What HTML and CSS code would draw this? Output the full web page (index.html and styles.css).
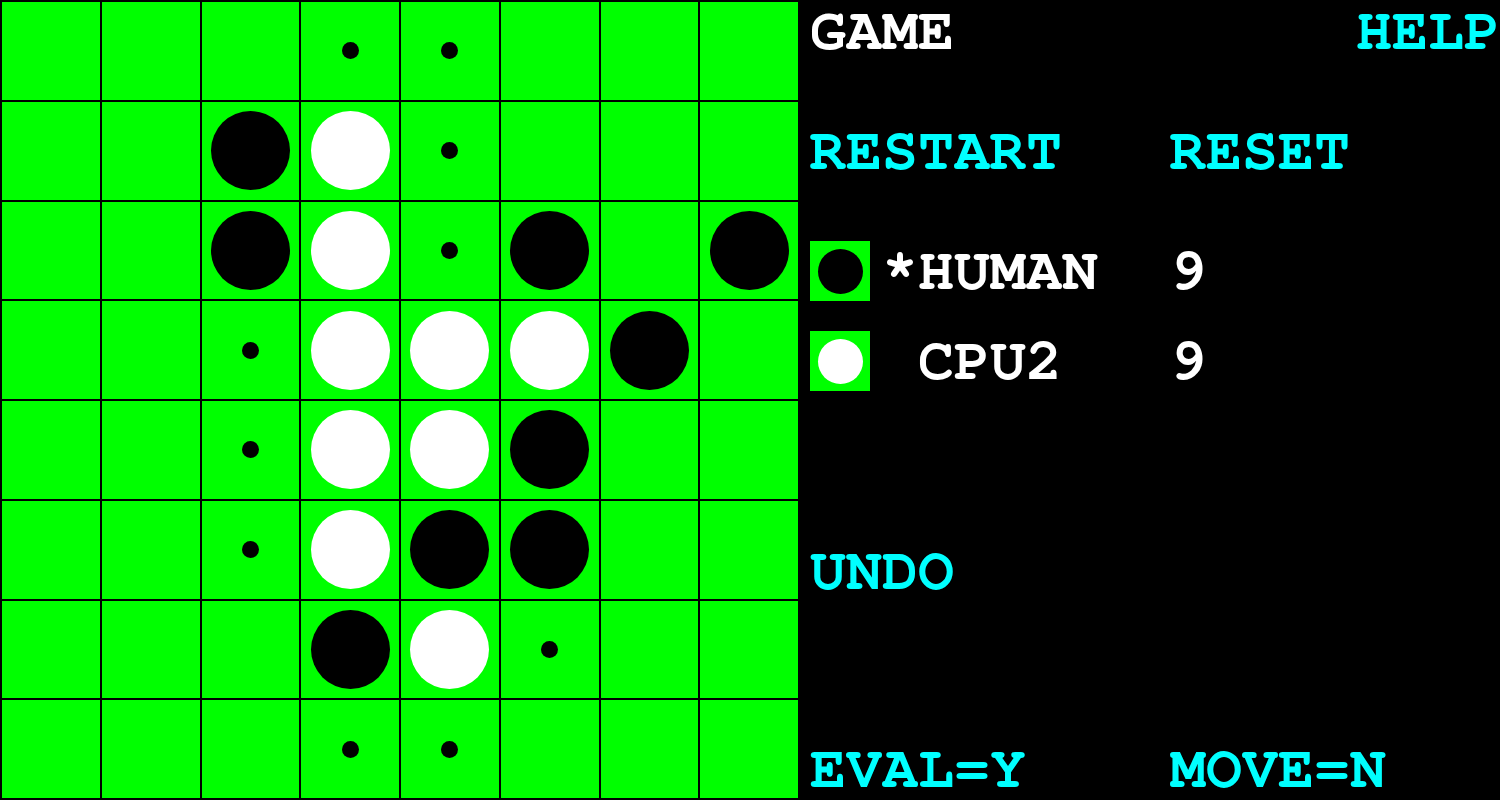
FILE: index.html
```html
<!DOCTYPE html>
<html>
	<head>
		<meta charset="UTF-8" />
		<title>Reversi</title>
		<link rel="stylesheet" href="styles.css">
	</head>
	<body>
		<div id="app">
			<div id="board">
				<div class="cell"></div><div class="cell"></div><div class="cell"></div><div class="cell"><div class="hint"></div></div><div class="cell"><div class="hint"></div></div><div class="cell"></div><div class="cell"></div><div class="cell"></div>
				<div class="cell"></div><div class="cell"></div><div class="cell"><div class="disc black"></div></div><div class="cell"><div class="disc white"></div></div><div class="cell"><div class="hint"></div></div><div class="cell"></div><div class="cell"></div><div class="cell"></div>
				<div class="cell"></div><div class="cell"></div><div class="cell"><div class="disc black"></div></div><div class="cell"><div class="disc white"></div></div><div class="cell"><div class="hint"></div></div><div class="cell"><div class="disc black"></div></div><div class="cell"></div><div class="cell"><div class="disc black"></div></div>
				<div class="cell"></div><div class="cell"></div><div class="cell"><div class="hint"></div></div><div class="cell"><div class="disc white"></div></div><div class="cell"><div class="disc white"></div></div><div class="cell"><div class="disc white"></div></div><div class="cell"><div class="disc black"></div></div><div class="cell"></div>
				<div class="cell"></div><div class="cell"></div><div class="cell"><div class="hint"></div></div><div class="cell"><div class="disc white"></div></div><div class="cell"><div class="disc white"></div></div><div class="cell"><div class="disc black"></div></div><div class="cell"></div><div class="cell"></div>
				<div class="cell"></div><div class="cell"></div><div class="cell"><div class="hint"></div></div><div class="cell"><div class="disc white"></div></div><div class="cell"><div class="disc black"></div></div><div class="cell"><div class="disc black"></div></div><div class="cell"></div><div class="cell"></div>
				<div class="cell"></div><div class="cell"></div><div class="cell"></div><div class="cell"><div class="disc black"></div></div><div class="cell"><div class="disc white"></div></div><div class="cell"><div class="hint"></div></div><div class="cell"></div><div class="cell"></div>
				<div class="cell"></div><div class="cell"></div><div class="cell"></div><div class="cell"><div class="hint"></div></div><div class="cell"><div class="hint"></div></div><div class="cell"></div><div class="cell"></div><div class="cell"></div>
			</div>

			<div id="panel">
				<div class="row top">
					<span class="label">GAME</span>
					<span class="link">HELP</span>
				</div>
				<div class="row cols gap-60">
					<span class="link">RESTART</span>
					<span class="link">RESET</span>
				</div>
				<div class="row player gap-60">
					<div class="swatch"><div class="mini black"></div></div>
					<span class="label">*HUMAN</span>
					<span class="label">9</span>
				</div>
				<div class="row player gap-30">
					<div class="swatch"><div class="mini white"></div></div>
					<span class="label">&nbsp;CPU2</span>
					<span class="label">9</span>
				</div>
				<div class="row gap-150">
					<span class="link">UNDO</span>
				</div>
				<div class="row cols gap-140">
					<span class="link">EVAL=Y</span>
					<span class="link">MOVE=N</span>
				</div>
			</div>
		</div>
	</body>
</html>
```

FILE: styles.css
```css
* {
    box-sizing: border-box;
}
body {
    margin: 0;
    width: 100vw;
    height: 100vh;
    overflow: hidden;
    background-color: #000;
    font-family: "Nimbus Mono PS", "Nimbus Mono L", "FreeMono", "Liberation Mono", monospace;
    font-weight: bold;
    font-size: 60px;
}

#app {
    display: flex;
    height: 800px;
}

#board {
    width: 800px;
    height: 800px;
    flex-shrink: 0;
    background-color: #000;
    display: grid;
    grid-template-columns: repeat(8, 1fr);
    grid-template-rows: repeat(8, 1fr);
    gap: 2px;
    padding: 2px;
}

.cell {
    background-color: #00ff00;
    display: flex;
    align-items: center;
    justify-content: center;
}

.disc {
    width: 79px;
    height: 79px;
    border-radius: 50%;
}
.hint {
    width: 17px;
    height: 17px;
    border-radius: 50%;
    background-color: #000;
}
.black { background-color: #000; }
.white { background-color: #fff; }

#panel {
    flex: 1;
    padding: 0 0 0 10px;
    display: flex;
    flex-direction: column;
}

.row {
    height: 60px;
    line-height: 60px;
    display: flex;
    white-space: pre;
}
.top {
    justify-content: space-between;
    margin-top: 1px;
}
.gap-60 { margin-top: 60px; }
.gap-30 { margin-top: 30px; }
.gap-150 { margin-top: 150px; }
.gap-140 { margin-top: 138px; }

.cols span:first-child {
    width: 360px;
}

.label { color: #fff; }
.link { color: #00ffff; }

.player {
    align-items: center;
}
.player .label:nth-of-type(1) {
    width: 288px;
    margin-left: 12px;
}
.swatch {
    width: 60px;
    height: 60px;
    background-color: #00ff00;
    display: flex;
    align-items: center;
    justify-content: center;
}
.mini {
    width: 45px;
    height: 45px;
    border-radius: 50%;
}
```
